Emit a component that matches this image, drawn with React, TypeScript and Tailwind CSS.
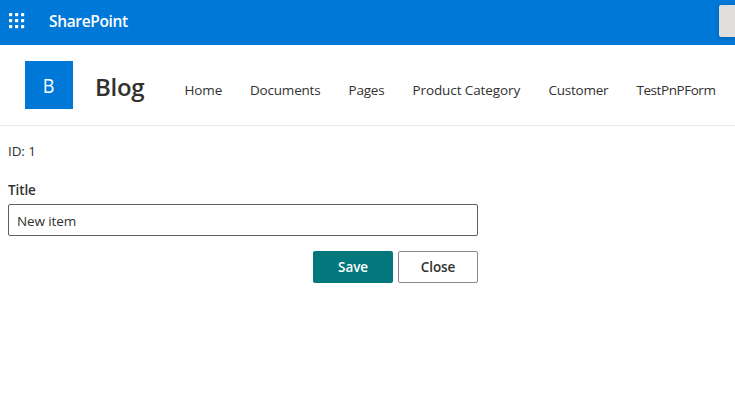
const links = [
  { label: 'Home', box: 'w-[65.5px]', text: 'tracking-[-0.1px]' },
  { label: 'Documents', box: 'w-[98.5px]', text: 'tracking-[-0.2px]' },
  { label: 'Pages', box: 'w-[64px]', text: 'tracking-[-0.2px]' },
  { label: 'Product Category', box: 'w-[136px]', text: 'tracking-[-0.1px]' },
  { label: 'Customer', box: 'w-[88px]', text: 'tracking-[-0.25px]' },
  { label: 'TestPnPForm', box: 'w-[80px]', text: 'tracking-[-0.45px]' },
];

const dots = [0, 6, 12];

function SuiteBar() {
  return (
    <header className="flex h-[45px] items-start justify-between bg-[#0078d7] text-white">
      <div className="flex h-[43px] items-center pl-[9px]">
        <svg width="16" height="16" viewBox="0 0 16 16" fill="currentColor" aria-label="App launcher" className="mt-[-1px]">
          {dots.map((y) => dots.map((x) => <rect key={`${x}-${y}`} x={x} y={y} width="3.2" height="3.2" rx="0.6" />))}
        </svg>
        <span className="ml-6 text-[15.5px] font-semibold tracking-[-0.35px]">SharePoint</span>
      </div>
      <div className="mt-[5px] h-8 w-4 rounded-l-[2px] bg-[#e1dfdd] shadow-[0_1px_4px_rgba(0,0,0,0.2)]" />
    </header>
  );
}

function SiteHeader() {
  return (
    <div className="flex h-[81px] items-start border-b border-[#eaeaea] pl-[25px] pt-4">
      <div className="flex size-12 shrink-0 items-center justify-center bg-[#0078d7] pr-0.5 pt-0.5 text-[20px] text-white"><span className="scale-x-90">B</span></div>
      <h1 className="ml-[22px] w-[89.5px] shrink-0 text-[24px] font-semibold leading-[52px] tracking-[-0.3px] text-[#323130]">Blog</h1>
      <nav className="flex pt-[19px] text-[13.5px] leading-5 text-[#323130]">
        {links.map((l) => (
          <a key={l.label} className={`${l.box} ${l.text} shrink-0 whitespace-nowrap`}>{l.label}</a>
        ))}
      </nav>
    </div>
  );
}

export default function App() {
  return (
    <div className="h-[406px] w-[735px] overflow-hidden bg-white font-['Open_Sans',sans-serif] text-[#323130]">
      <SuiteBar />
      <SiteHeader />
      <main className="w-[478px] pl-2 pt-[15px] text-[13.5px] leading-5 tracking-[-0.1px]">
        <div>ID: 1</div>
        <label className="mt-[19px] block text-[13.5px] font-semibold">Title</label>
        <div className="mt-1 flex h-8 items-center rounded-[2px] border border-[#605e5c] px-2 pt-0.5">New item</div>
        <div className="mt-[15px] flex justify-end gap-[5px] text-[13.5px] font-semibold">
          <button className="h-8 w-20 rounded-[2px] bg-[#03787c] text-white">Save</button>
          <button className="h-8 w-20 rounded-[2px] border border-[#8a8886] bg-white">Close</button>
        </div>
      </main>
    </div>
  );
}
